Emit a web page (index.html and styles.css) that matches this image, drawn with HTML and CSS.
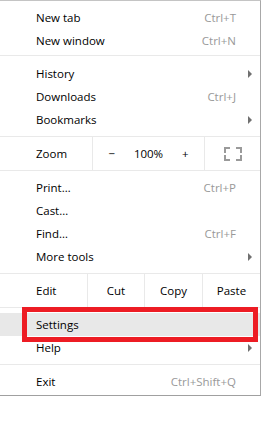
FILE: index.html
```html
<!DOCTYPE html>
<html lang="en">
<head>
    <meta charset="UTF-8">
    <meta name="viewport" content="width=device-width, initial-scale=1.0">
    <title>Chrome menu</title>
    <link rel="stylesheet" href="styles.css">
</head>
<body>

    <div class="menu">

        <!-- Tabs and windows -->
        <div class="group">
            <div class="item"><span>New tab</span><span class="key">Ctrl+T</span></div>
            <div class="item"><span>New window</span><span class="key">Ctrl+N</span></div>
        </div>

        <!-- History and bookmarks -->
        <div class="group">
            <div class="item sub"><span>History</span><span class="arrow"></span></div>
            <div class="item"><span>Downloads</span><span class="key">Ctrl+J</span></div>
            <div class="item sub"><span>Bookmarks</span><span class="arrow"></span></div>
        </div>

        <!-- Zoom controls -->
        <div class="row">
            <div class="label">Zoom</div>
            <div class="zoom-ctrl">
                <span class="btn">&minus;</span>
                <span class="btn pct">100%</span>
                <span class="btn">+</span>
            </div>
            <div class="fullscreen">
                <svg width="18" height="14" viewBox="0 0 18 14">
                    <path d="M1 6V1h5M12 1h5v5M17 8v5h-5M6 13H1V8" fill="none" stroke="#9a9a9a" stroke-width="2"/>
                </svg>
            </div>
        </div>

        <!-- Page tools -->
        <div class="group">
            <div class="item"><span>Print&hellip;</span><span class="key">Ctrl+P</span></div>
            <div class="item"><span>Cast&hellip;</span></div>
            <div class="item"><span>Find&hellip;</span><span class="key">Ctrl+F</span></div>
            <div class="item sub"><span>More tools</span><span class="arrow"></span></div>
        </div>

        <!-- Edit buttons -->
        <div class="row">
            <div class="label">Edit</div>
            <div class="cell">Cut</div>
            <div class="cell">Copy</div>
            <div class="cell">Paste</div>
        </div>

        <!-- Settings and help -->
        <div class="group">
            <div class="item active">
                <span>Settings</span>
                <div class="mark"></div>
            </div>
            <div class="item sub"><span>Help</span><span class="arrow"></span></div>
        </div>

        <div class="group last">
            <div class="item"><span>Exit</span><span class="key">Ctrl+Shift+Q</span></div>
        </div>

    </div>

</body>
</html>
```

FILE: styles.css
```css
* {
    margin: 0;
    padding: 0;
    box-sizing: border-box;
}

body {
    font-family: 'Open Sans', 'Noto Sans', sans-serif;
    font-size: 11.5px;
    color: #000;
    background-color: #fff;
}

.menu {
    width: 261px;
    background-color: #fff;
    border-top: 1px solid #c4c4c4;
    border-right: 1px solid #a8a8a8;
    border-bottom: 1px solid #a0a0a0;
    box-shadow: 0 2px 2px rgba(0, 0, 0, 0.3);
}

.menu > * + * {
    border-top: 1px solid #e9e9e9;
}

.group {
    padding: 5px 0;
}

.group:first-child {
    padding-bottom: 3px;
}

.group:nth-child(2) {
    padding-top: 6px;
}

.group.last {
    padding-bottom: 2px;
}

.item {
    position: relative;
    display: flex;
    align-items: center;
    height: 23px;
    padding-left: 36px;
    padding-right: 24px;
}

.item.sub {
    padding-right: 8px;
}

.key {
    margin-left: auto;
    color: #999;
}

.arrow {
    margin-left: auto;
    width: 0;
    height: 0;
    border-left: 4px solid #707070;
    border-top: 4px solid transparent;
    border-bottom: 4px solid transparent;
}

.item.active {
    background-color: #e8e8e8;
}

/* red annotation box round Settings */
.mark {
    position: absolute;
    left: 22px;
    top: -6px;
    width: 236px;
    height: 35px;
    border: 5px solid #ed1c24;
}

.row {
    display: flex;
    height: 34px;
}

.label {
    flex: 1;
    display: flex;
    align-items: center;
    padding-left: 36px;
}

.zoom-ctrl {
    width: 112px;
    display: flex;
    border-left: 1px solid #e9e9e9;
}

.btn {
    flex: 1;
    display: flex;
    align-items: center;
    justify-content: center;
}

.pct {
    flex: 0 0 36px;
}

.fullscreen {
    width: 56px;
    display: flex;
    align-items: center;
    justify-content: center;
    border-left: 1px solid #e9e9e9;
}

.cell {
    display: flex;
    align-items: center;
    justify-content: center;
    border-left: 1px solid #e9e9e9;
    width: 58px;
}

.cell:nth-child(2) {
    width: 57px;
}
```
